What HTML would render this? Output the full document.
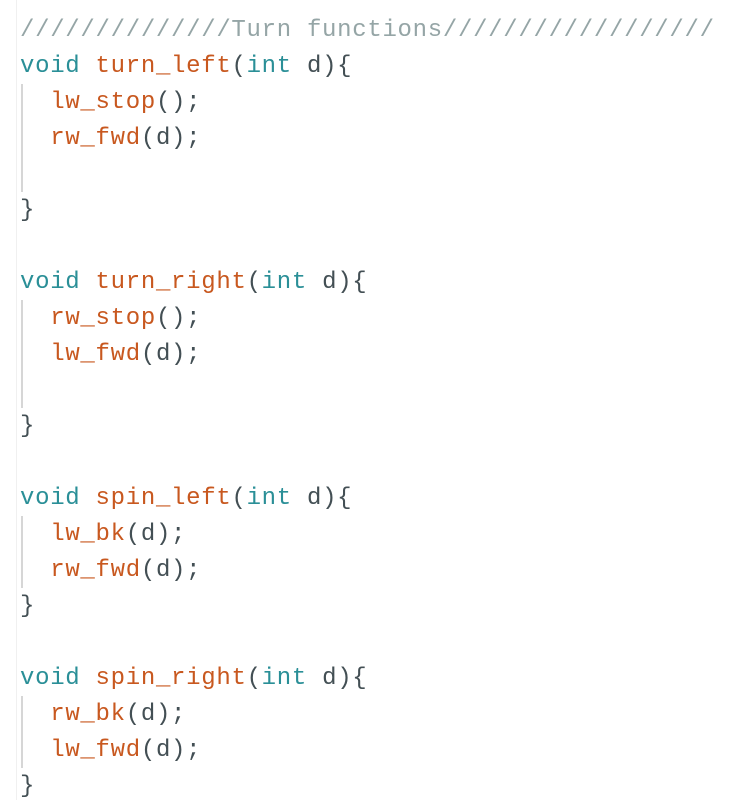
<!DOCTYPE html>
<html><head><meta charset="utf-8"><style>
html,body{margin:0;padding:0;background:#fff;width:752px;height:800px;overflow:hidden}
.wrap{position:relative;width:752px;height:800px}
.bl{position:absolute;left:16px;top:0;width:1px;height:800px;background:#f0f0f0}
.code{position:absolute;left:20px;top:13px;font-family:"Liberation Mono",monospace;font-size:24px;letter-spacing:0.7px;line-height:36px;color:#434f54;white-space:pre}
.c{color:#95a5a6}.k{color:#2a8f97}.f{color:#c8581f}
.g{position:absolute;left:21px;width:2px;background:#d6d6d6}
</style></head><body><div class="wrap">
<div class="bl"></div>
<div class="g" style="top:84px;height:108px"></div>
<div class="g" style="top:300px;height:108px"></div>
<div class="g" style="top:516px;height:72px"></div>
<div class="g" style="top:696px;height:72px"></div>
<div class="code"><span class="c">//////////////Turn functions//////////////////</span>
<span class="k">void</span> <span class="f">turn_left</span>(<span class="k">int</span> d){
  <span class="f">lw_stop</span>();
  <span class="f">rw_fwd</span>(d);

}

<span class="k">void</span> <span class="f">turn_right</span>(<span class="k">int</span> d){
  <span class="f">rw_stop</span>();
  <span class="f">lw_fwd</span>(d);

}

<span class="k">void</span> <span class="f">spin_left</span>(<span class="k">int</span> d){
  <span class="f">lw_bk</span>(d);
  <span class="f">rw_fwd</span>(d);
}

<span class="k">void</span> <span class="f">spin_right</span>(<span class="k">int</span> d){
  <span class="f">rw_bk</span>(d);
  <span class="f">lw_fwd</span>(d);
}</div>
</div></body></html>
